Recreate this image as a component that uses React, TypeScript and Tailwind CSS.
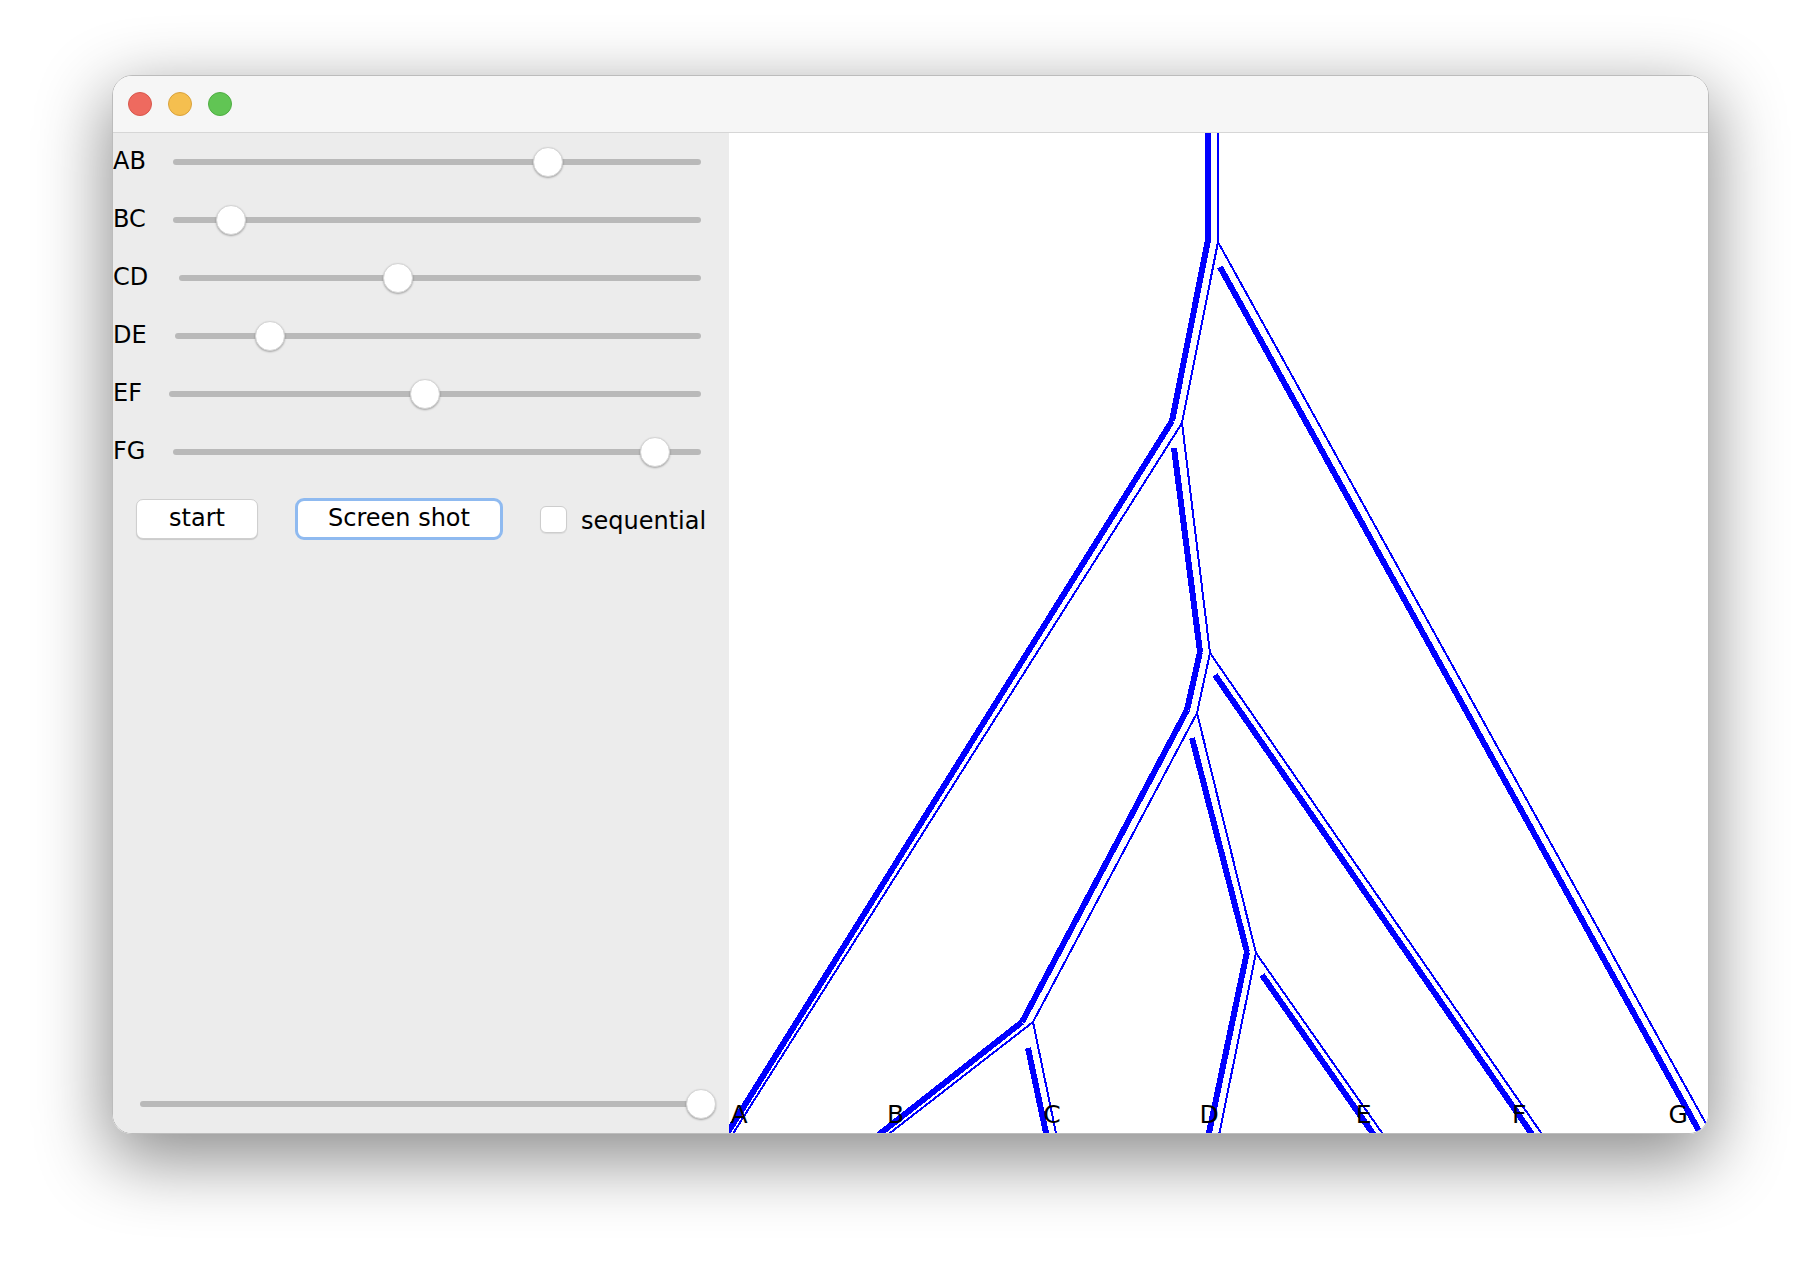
const sliders = [
  { label: 'AB', labelW: 'w-[60px]', trackLeft: 173, knob: 548 },
  { label: 'BC', labelW: 'w-[60px]', trackLeft: 173, knob: 231 },
  { label: 'CD', labelW: 'w-[66px]', trackLeft: 179, knob: 398 },
  { label: 'DE', labelW: 'w-[62px]', trackLeft: 175, knob: 270 },
  { label: 'EF', labelW: 'w-[56px]', trackLeft: 169, knob: 425 },
  { label: 'FG', labelW: 'w-[60px]', trackLeft: 173, knob: 655 },
];

// species tree (thick) and gene tree (thin), page coordinates
const thick = [
  [1208, 120, 1208, 240],
  [1208, 240, 1172, 421],
  [1220, 267, 1704, 1140],
  [1172, 421, 723, 1140],
  [1174, 448, 1200, 652],
  [1200, 652, 1187, 710],
  [1215, 675, 1536, 1140],
  [1187, 710, 1022, 1022],
  [1192, 738, 1247, 952],
  [1022, 1022, 872, 1140],
  [1028, 1048, 1047.5, 1140],
  [1247, 952, 1207.5, 1140],
  [1262, 975, 1377.5, 1140],
];

const thin = [
  [1218, 120, 1218, 242],
  [1218, 242, 1182, 423],
  [1218, 242, 1715, 1140],
  [1182, 423, 729, 1140],
  [1182, 423, 1210, 653],
  [1210, 653, 1197, 713],
  [1210, 653, 1546, 1140],
  [1197, 713, 1033, 1022],
  [1197, 713, 1256, 953],
  [1033, 1022, 881, 1140],
  [1033, 1022, 1057.4, 1140],
  [1256, 953, 1218, 1140],
  [1256, 953, 1387, 1140],
];

const leaves = ['A', 'B', 'C', 'D', 'E', 'F', 'G'];

const Knob = ({ left }: { left: number }) => (
  <div
    className="absolute top-1/2 -translate-y-1/2 w-[30px] h-[30px] rounded-full bg-white border-[0.5px] border-[#d4d4d4] shadow-[0_1px_2px_rgba(0,0,0,0.3)]"
    style={{ left: `${left - 15}px` }}
  />
);

const Track = ({ knob }: { knob: number }) => (
  <div className="relative flex-1 h-[30px] flex items-center">
    <div className="w-full h-[6px] rounded-full bg-[#b9b9b9]" />
    <Knob left={knob} />
  </div>
);

const App = () => {
  return (
    <div className="w-[1820px] h-[1282px] bg-white pt-[75px] pl-[112px] font-['DejaVu_Sans',sans-serif] text-black">
      <div className="w-[1597px] h-[1059px] rounded-[20px] overflow-hidden border border-[#bcbcbc] shadow-[0_22px_70px_4px_rgba(0,0,0,0.45)] flex flex-col">
        <div className="h-[57px] shrink-0 bg-[#f6f6f6] border-b border-[#d6d6d6] flex items-center pl-[15px] gap-[16px]">
          <span className="w-[24px] h-[24px] rounded-full bg-[#ee6a5f] border border-[#d8574c]" />
          <span className="w-[24px] h-[24px] rounded-full bg-[#f5bf4f] border border-[#d9a23c]" />
          <span className="w-[24px] h-[24px] rounded-full bg-[#61c554] border border-[#4fad43]" />
        </div>

        <div className="flex flex-1">
          <div className="w-[616px] bg-[#ececec] flex flex-col">
            {sliders.map((s) => (
              <div key={s.label} className="h-[58px] flex items-center pr-[28px] text-[24px] leading-none">
                <span className={`${s.labelW} shrink-0 -mt-[2px]`}>{s.label}</span>
                <Track knob={s.knob - s.trackLeft} />
              </div>
            ))}

            <div className="mt-[17px] h-[42px] flex items-center text-[24px] leading-none">
              <button className="ml-[23px] w-[122px] h-[40px] rounded-[7px] bg-white border border-[#cfcfcf] shadow-[0_1px_1px_rgba(0,0,0,0.15)] pb-[3px]">
                start
              </button>
              <button className="ml-[37px] w-[208px] h-[42px] rounded-[9px] bg-white border-[3px] border-[#8fbaf0] pb-[3px]">
                Screen shot
              </button>
              <span className="ml-[37px] w-[27px] h-[27px] rounded-[6px] bg-white border border-[#cdcdcd] shadow-[0_1px_1px_rgba(0,0,0,0.08)]" />
              <span className="ml-[14px] mt-[3px]">sequential</span>
            </div>

            <div className="mt-auto pb-[14px] pl-[27px] pr-[28px] flex">
              <Track knob={561} />
            </div>
          </div>

          <div className="flex-1 bg-white overflow-hidden">
            <svg width="979" height="1000" viewBox="729 133 979 1000" className="block">
              {thick.map(([x1, y1, x2, y2], i) => (
                <line key={`k${i}`} x1={x1} y1={y1} x2={x2} y2={y2} stroke="#0000ff" strokeWidth={6} shapeRendering="crispEdges" />
              ))}
              {thin.map(([x1, y1, x2, y2], i) => (
                <line key={`t${i}`} x1={x1} y1={y1} x2={x2} y2={y2} stroke="#0000ff" strokeWidth={2} shapeRendering="crispEdges" />
              ))}
              {leaves.map((l, i) => (
                <text key={l} x={730.6 + i * 156.3} y={1123} fontSize={25} fontFamily="'DejaVu Sans', sans-serif" fill="#000">
                  {l}
                </text>
              ))}
            </svg>
          </div>
        </div>
      </div>
    </div>
  );
};

export default App;
